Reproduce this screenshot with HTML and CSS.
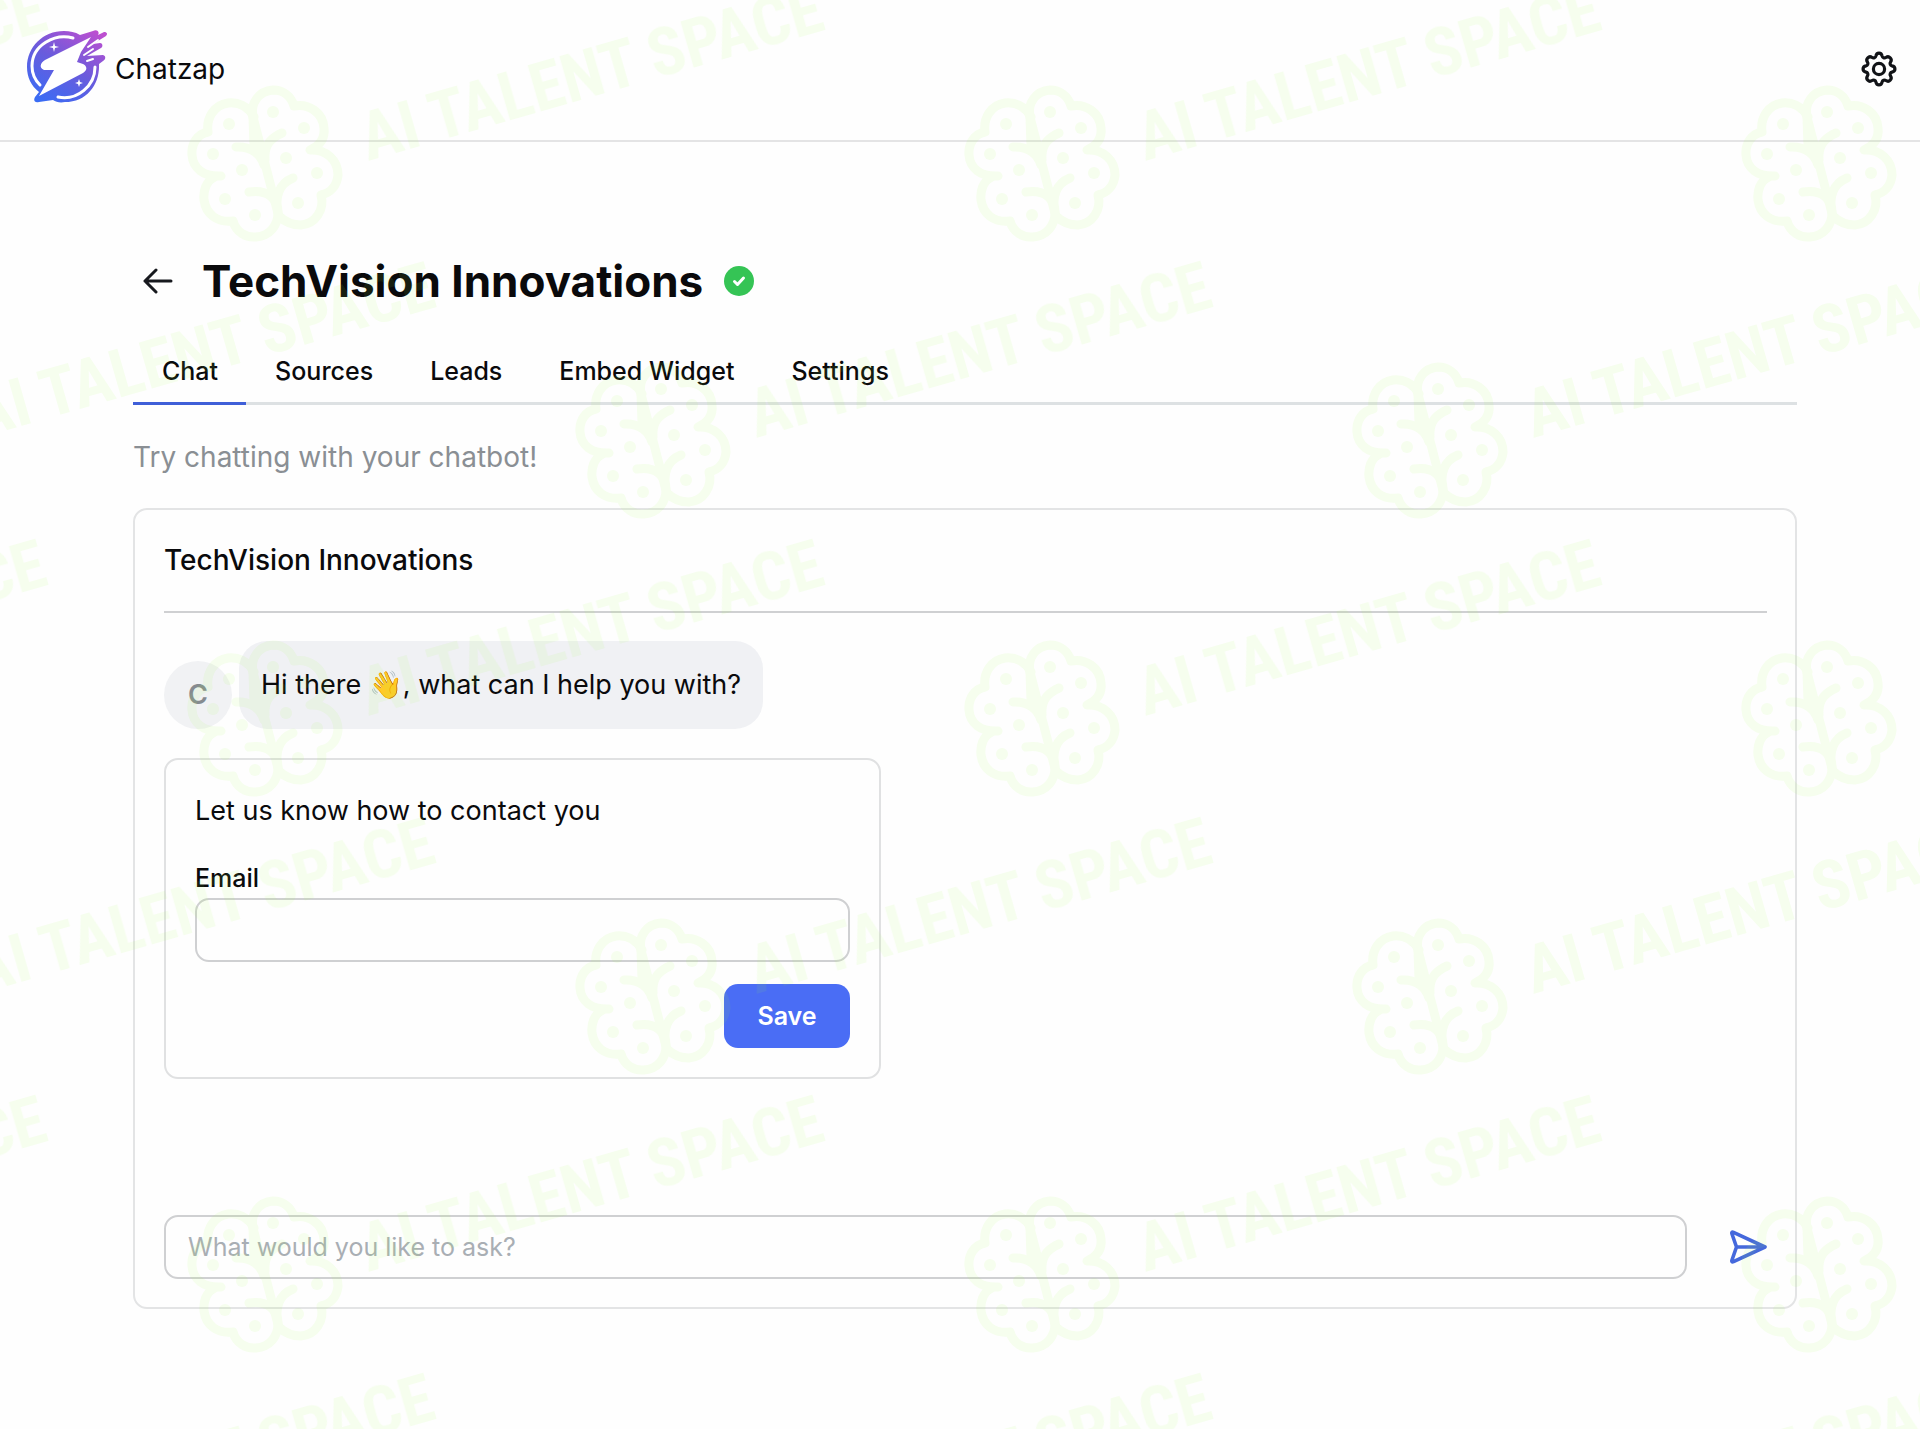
FILE: index.html
```html
<!DOCTYPE html>
<html lang="en">
<head>
<meta charset="utf-8">
<title>Chatzap</title>
<link rel="stylesheet" href="styles.css">
</head>
<body>
<header class="topbar">
  <a class="brand" href="#">
    <svg class="brand-logo" viewBox="0 0 80 73" aria-hidden="true">
      <defs>
        <linearGradient id="zap" x1="0.2" y1="1" x2="0.85" y2="0">
          <stop offset="0" stop-color="#3a6cf4"/>
          <stop offset="0.5" stop-color="#6a5bdc"/>
          <stop offset="1" stop-color="#bd4fd0"/>
        </linearGradient>
      </defs>
      <path fill="url(#zap)" d="M37 1C43 1 48 2 53 5L66 1C70 -1 73 2 71 5L77 2C80 2 81 4 79 6L66 14L73 13C76 13 76 17 74 18L60 26L76 25C79 26 79 29 76 31L72 34C73 54 60 72 38 72C33 73 29 72 26 70L12 72C8 73 6 71 8 67L12 62C4 56 0 47 0 37C0 17 16 1 37 1Z"/>
      <path fill="#fff" d="M64 7L18 30C13 33 12 38 17 40L27 40L12 66L56 43C61 40 60 36 56 34L50 32L54 22Z"/>
      <path fill="none" stroke="#fff" stroke-width="3" stroke-linecap="round" d="M46 8C28 3 5 15 5 36C5 44 8 50 13 55M31 67C50 71 68 56 68 37"/>
      <path fill="none" stroke="#fff" stroke-width="2" stroke-linecap="round" d="M61 17L71 10M57 25L66 19M60 31L66 29"/>
      <path fill="#fff" d="M27 12L28 16L32 17L28 18L27 22L26 18L22 17L26 16ZM52 49L53 52L56 53L53 54L52 57L51 54L48 53L51 52Z"/>
    </svg>
    <span>Chatzap</span>
  </a>
  <button class="icon-button" type="button" aria-label="Account settings">
    <svg class="gear" viewBox="0 0 36 36" aria-hidden="true">
      <g fill="none" stroke="#111317" stroke-width="3.2" stroke-linejoin="round">
        <circle cx="18" cy="18" r="5.6"/>
        <path d="M14.9 5C15.6 1.1 20.4 1.1 21.1 5C21.5 6.7 23.4 7.5 24.9 6.5C28.1 4.3 31.7 7.9 29.5 11.1C28.5 12.6 29.3 14.5 31 14.9C34.9 15.6 34.9 20.4 31 21.1C29.3 21.5 28.5 23.4 29.5 24.9C31.7 28.1 28.1 31.7 24.9 29.5C23.4 28.5 21.5 29.3 21.1 31C20.4 34.9 15.6 34.9 14.9 31C14.5 29.3 12.6 28.5 11.1 29.5C7.9 31.7 4.3 28.1 6.5 24.9C7.5 23.4 6.7 21.5 5 21.1C1.1 20.4 1.1 15.6 5 14.9C6.7 14.5 7.5 12.6 6.5 11.1C4.3 7.9 7.9 4.3 11.1 6.5C12.6 7.5 14.5 6.7 14.9 5Z"/>
      </g>
    </svg>
  </button>
</header>

<main class="page">
  <div class="title-row">
    <a class="back" href="#" aria-label="Back">
      <svg viewBox="0 0 30 28" aria-hidden="true"><path fill="none" stroke="#17191e" stroke-width="3" stroke-linecap="round" stroke-linejoin="round" d="M28 14H2M13 3L2 14L13 25"/></svg>
    </a>
    <h1>TechVision Innovations</h1>
    <svg class="verified" viewBox="0 0 30 30" role="img" aria-label="Active"><circle cx="15" cy="15" r="15" fill="#35c455"/><path fill="none" stroke="#fff" stroke-width="3" stroke-linecap="round" stroke-linejoin="round" d="M10.500 15.500L13.500 18.500L19.500 12"/></svg>
  </div>

  <nav class="tabs">
    <a class="tab tab-active" href="#">Chat</a>
    <a class="tab" href="#">Sources</a>
    <a class="tab" href="#">Leads</a>
    <a class="tab" href="#">Embed Widget</a>
    <a class="tab" href="#">Settings</a>
  </nav>

  <p class="hint">Try chatting with your chatbot!</p>

  <section class="chat">
    <h2 class="chat-title">TechVision Innovations</h2>
    <div class="message">
      <span class="avatar">C</span>
      <p class="bubble">Hi there <span class="emoji">👋</span>, what can I help you with?</p>
    </div>
    <form class="contact">
      <p class="contact-title">Let us know how to contact you</p>
      <label class="contact-label" for="email">Email</label>
      <input class="field" id="email" type="email">
      <button class="save" type="button">Save</button>
    </form>
    <form class="composer">
      <input class="field" type="text" placeholder="What would you like to ask?" aria-label="Message">
      <button class="icon-button" type="button" aria-label="Send">
        <svg class="send" viewBox="0 0 38 34" aria-hidden="true"><path fill="none" stroke="#4568dc" stroke-width="3.600" stroke-linejoin="round" stroke-linecap="round" d="M7.500 17L3 4C2.500 2.500 3 1.800 4.500 2.400L36 17L4.500 31.600C3 32.200 2.500 31.500 3 30L7.500 17H34"/></svg>
      </button>
    </form>
  </section>
</main>

<svg class="watermark" aria-hidden="true">
  <defs>
    <g id="mark">
      <g fill="none" stroke="#a0ff46" stroke-width="9" stroke-linecap="round" stroke-linejoin="round">
        <path d="M-10 -46C-16 -57 -26 -61 -36 -60C-50 -58 -58 -45 -56 -31C-66 -29 -73 -20 -72 -8C-71 5 -61 14 -43 13M-49 14C-58 18 -61 28 -60 37C-58 51 -47 60 -31 58C-28 69 -18 75 -8 74C6 73 14 62 14 50C14 36 4 26 -15 29"/>
        <path d="M-10 -18L-11 -46C-14 -60 -5 -72 9 -73C19 -73 27 -67 30 -57C45 -60 59 -50 60 -35C61 -26 57 -18 46 -13C62 -14 74 -3 74 12C73 22 67 30 57 32C61 47 51 61 37 62C29 62 21 59 15 53"/>
        <path d="M-11 -46L7 24L14 50C11 35 14 21 29 15M-28 -16C-12 -17 -3 -8 0 2M18 -30C4 -24 0 -15 1 -3"/>
      </g>
      <g fill="#a0ff46">
        <circle cx="-35" cy="-39" r="6"/><circle cx="9" cy="-51" r="6"/><circle cx="40" cy="-35" r="6"/><circle cx="-51" cy="-9" r="6"/><circle cx="22" cy="-5" r="6"/><circle cx="-22" cy="7" r="6"/><circle cx="53" cy="10" r="6"/><circle cx="-39" cy="36" r="6"/><circle cx="34" cy="40" r="6"/><circle cx="-9" cy="52" r="6"/>
        <text class="mark-text" x="104" y="-2" transform="rotate(-16 104 -2)">AI TALENT SPACE</text>
      </g>
    </g>
    <g id="mark-row"><use href="#mark" x="-777"/><use href="#mark"/><use href="#mark" x="777"/><use href="#mark" x="1554"/></g>
  </defs>
  <g opacity="0.09">
    <use href="#mark-row" x="264" y="163"/>
    <use href="#mark-row" x="652" y="440"/>
    <use href="#mark-row" x="264" y="718"/>
    <use href="#mark-row" x="652" y="996"/>
    <use href="#mark-row" x="264" y="1274"/>
    <use href="#mark-row" x="652" y="1552"/>
  </g>
</svg>
</body>
</html>
```
FILE: styles.css
```css
* { box-sizing: border-box; }

body {
  margin: 0;
  position: relative;
  min-height: 100vh;
  background: #fefefe;
  color: #0a0a0c;
  font-family: Inter, "Liberation Sans", sans-serif;
  font-size: 28px;
  line-height: 40px;
}

h1, h2, p { margin: 0; }
a { color: inherit; text-decoration: none; }
svg { display: block; }
button, input { font: inherit; color: inherit; }

.topbar {
  display: flex;
  align-items: center;
  justify-content: space-between;
  height: 142px;
  padding: 0 23px 2px 27px;
  border-bottom: 2px solid #e4e4e5;
}

.brand { display: flex; align-items: center; gap: 8px; }
.brand-logo { width: 80px; height: 73px; margin-bottom: 6px; }

.icon-button { padding: 0; border: 0; background: none; }
.gear { width: 36px; height: 36px; }

.page { padding: 111px 123px 24px 133px; }

.title-row { display: flex; align-items: center; padding-left: 10px; }
.back svg { width: 30px; height: 28px; }
h1 { margin: 0 21px 0 29px; font-size: 44px; line-height: 56px; font-weight: 700; }
.verified { width: 30px; height: 30px; }

.tabs {
  display: flex;
  margin-top: 33px;
  border-bottom: 3px solid #dde1e3;
  font-size: 25px;
  font-weight: 500;
}
.tab { padding: 9px 28px 11px 29px; margin-bottom: -3px; border-bottom: 3px solid transparent; }
.tab-active { border-color: #3f5fd8; }

.hint { margin-top: 32px; color: #8a8f94; }

.chat {
  margin-top: 31px;
  padding: 30px 28px 28px 29px;
  border: 2px solid #e3e4e5;
  border-radius: 14px;
}
.chat-title {
  padding-bottom: 31px;
  border-bottom: 2px solid #cfd0d2;
  font-size: 28px;
  font-weight: 500;
}

.message { display: flex; align-items: flex-end; gap: 7px; margin-top: 28px; }
.avatar {
  width: 68px;
  height: 68px;
  border-radius: 50%;
  background: #f1f2f4;
  color: #868b90;
  font-size: 27px;
  font-weight: 600;
  line-height: 68px;
  text-align: center;
}
.bubble { padding: 24px 22px; border-radius: 28px; background: #f0f1f4; font-size: 27px; }
.emoji { font-size: 27px; }

.contact {
  display: flex;
  flex-direction: column;
  width: 717px;
  margin-top: 29px;
  padding: 31px 29px 29px;
  border: 2px solid #e0e1e2;
  border-radius: 14px;
}
.contact-title { font-size: 27px; }
.contact-label { margin-top: 27px; font-size: 25px; font-weight: 500; }
.field {
  width: 100%;
  height: 64px;
  padding: 0 22px;
  border: 2px solid #cfd0d2;
  border-radius: 14px;
  background: transparent;
  font-size: 25px;
}
.field::placeholder { color: #a9aeb4; opacity: 1; }
.save {
  align-self: flex-end;
  width: 126px;
  height: 64px;
  margin-top: 22px;
  border: 0;
  border-radius: 14px;
  background: #4a6df5;
  color: #fff;
  font-size: 25px;
  font-weight: 600;
}

.composer { display: flex; align-items: center; gap: 42px; margin-top: 136px; }
.send { width: 38px; height: 34px; }

.watermark {
  position: absolute;
  top: 0;
  left: 0;
  width: 100%;
  height: 100%;
  overflow: hidden;
  pointer-events: none;
}
.mark-text {
  font-family: "Liberation Sans Narrow", "Roboto Condensed", "Open Sans Condensed", "Liberation Sans", sans-serif;
  font-size: 67px;
  font-weight: 700;
}
```
